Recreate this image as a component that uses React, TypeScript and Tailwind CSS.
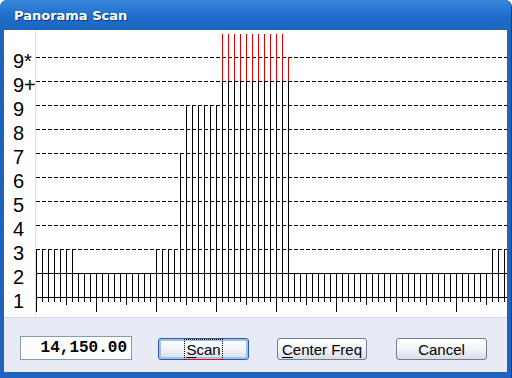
import React from "react";

// level index: 1..9 = digits, 10 = 9+, 11 = 9*, 12 = off scale
const LEVEL_LABELS = ["9*", "9+", "9", "8", "7", "6", "5", "4", "3", "2", "1"];

function levelY(level: number) {
  if (level >= 12) return 4;
  return 267 - 24 * (level - 1);
}

function barLevel(k: number) {
  if (k <= 6) return 3;
  if (k <= 19) return 2;
  if (k <= 23) return 3;
  if (k === 24) return 7;
  if (k <= 30) return 9;
  if (k <= 41) return 12;
  if (k === 42) return 11;
  if (k <= 75) return 2;
  return 3;
}

const BARS = Array.from({ length: 79 }, (_, k) => ({ k, level: barLevel(k) }));

function Chart() {
  const w = 471;
  const redLimit = levelY(10);
  return (
    <svg width={w} height={287} className="block">
      {Array.from({ length: 11 }, (_, i) => {
        const level = i + 1;
        const y = levelY(level) + 0.5;
        return (
          <line
            key={level}
            x1={0}
            x2={w}
            y1={y}
            y2={y}
            stroke="#000"
            strokeWidth={1}
            strokeDasharray={level <= 2 ? undefined : "4 2"}
          />
        );
      })}
      {BARS.map(({ k, level }) => {
        const x = 6 * k + 0.5;
        const top = levelY(level);
        const bottom = k % 10 === 0 ? 282 : k % 5 === 0 ? 275 : 272;
        const blackTop = Math.max(top, redLimit);
        return (
          <g key={k}>
            {top < redLimit && (
              <line x1={x} x2={x} y1={top} y2={redLimit} stroke="#e00000" strokeWidth={1} />
            )}
            <line x1={x} x2={x} y1={blackTop} y2={bottom} stroke="#000" strokeWidth={1} />
          </g>
        );
      })}
    </svg>
  );
}

function XpButton({
  children,
  focused,
  className,
}: {
  children: React.ReactNode;
  focused?: boolean;
  className?: string;
}) {
  return (
    <button
      className={
        "h-[22px] rounded-[3px] border text-[15px] leading-none text-black flex items-center justify-center " +
        (focused
          ? "border-[#2c5aa0] bg-gradient-to-b from-[#ffffff] via-[#f2f4f8] to-[#d8dde8] shadow-[inset_0_0_0_2px_#9cc0f2] "
          : "border-[#6f7d93] bg-gradient-to-b from-[#ffffff] via-[#f3f4f7] to-[#d9dde6] ") +
        (className ?? "")
      }
    >
      {children}
    </button>
  );
}

export default function App() {
  return (
    <div className="w-[512px] h-[378px] flex flex-col bg-[#1f63bd] rounded-t-[7px] border-r border-r-[#0f3f86] font-['Liberation_Sans',Arial,sans-serif]">
      {/* Title bar */}
      <div className="h-[30px] shrink-0 rounded-t-[7px] bg-gradient-to-b from-[#3b87de] via-[#1f6fcb] to-[#1b66bf] flex items-center pl-[14px] pt-[2px]">
        <span className="font-['DejaVu_Sans',sans-serif] font-bold text-[13px] text-white [text-shadow:1px_1px_0_#0d3c7c]">
          Panorama Scan
        </span>
      </div>

      <div className="flex-1 flex flex-col mx-[4px] mb-[6px] min-h-0">
        {/* Scale + chart */}
        <div className="h-[287px] shrink-0 bg-white flex">
          <div className="w-[32px] shrink-0 border-r border-r-[#d6def0] pt-[19px] pl-[9px] flex flex-col">
            {LEVEL_LABELS.map((label) => (
              <div key={label} className="h-[24px] flex items-center text-[20px] leading-none text-black">
                {label}
              </div>
            ))}
          </div>
          <Chart />
        </div>

        {/* Controls */}
        <div className="flex-1 bg-[#e8ebf5] border-t border-t-[#d3dbeb] flex items-start pt-[18px] pl-[16px]">
          <div className="w-[112px] h-[24px] border border-[#7f9db9] bg-white flex items-center justify-end pr-[4px] font-['Liberation_Mono',monospace] font-bold text-[16px] text-black">
            14,150.00
          </div>
          <XpButton focused className="ml-[26px] mt-[2px] w-[91px]">
            <span className="h-[21px] flex items-center px-[1px] border border-dotted border-black border-b-[#e00000]">
              <span className="underline underline-offset-2">S</span>can
            </span>
          </XpButton>
          <XpButton className="ml-[28px] mt-[2px] w-[90px]">
            <span>
              <span className="underline underline-offset-2">C</span>enter Freq
            </span>
          </XpButton>
          <XpButton className="ml-[29px] mt-[2px] w-[91px]">Cancel</XpButton>
        </div>
      </div>
    </div>
  );
}
